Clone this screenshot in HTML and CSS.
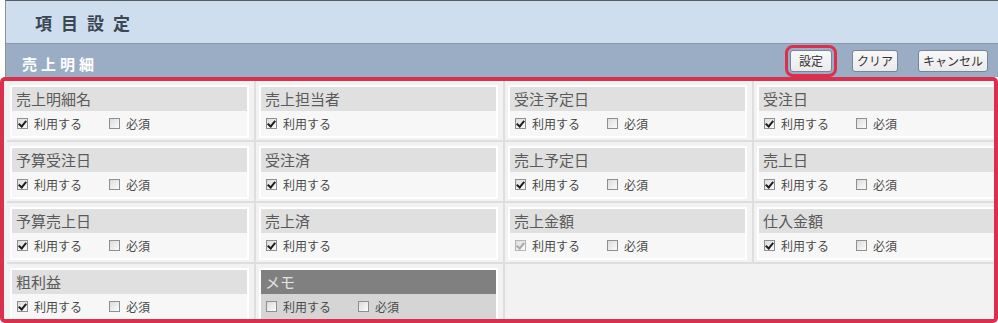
FILE: index.html
```html
<!DOCTYPE html>
<html lang="ja">
<head>
    <meta charset="UTF-8">
    <meta name="viewport" content="width=device-width, initial-scale=1.0">
    <title>項目設定</title>
    <link rel="stylesheet" href="styles.css">
</head>
<body>
    <div class="screen">
        <div class="title-bar">
            <h1>項目設定</h1>
        </div>
        <div class="section-bar">
            <h2>売上明細</h2>
            <div class="actions">
                <button type="button" class="btn btn-focus">設定</button>
                <button type="button" class="btn">クリア</button>
                <button type="button" class="btn">キャンセル</button>
            </div>
        </div>
    </div>

    <div class="items-frame">
        <div class="items">
            <div class="cell">
                <div class="item">
                    <div class="item-name">売上明細名</div>
                    <div class="item-opts">
                        <label class="opt"><span class="box checked"></span>利用する</label>
                        <label class="opt"><span class="box"></span>必須</label>
                    </div>
                </div>
            </div>
            <div class="cell">
                <div class="item">
                    <div class="item-name">売上担当者</div>
                    <div class="item-opts">
                        <label class="opt"><span class="box checked"></span>利用する</label>
                    </div>
                </div>
            </div>
            <div class="cell">
                <div class="item">
                    <div class="item-name">受注予定日</div>
                    <div class="item-opts">
                        <label class="opt"><span class="box checked"></span>利用する</label>
                        <label class="opt"><span class="box"></span>必須</label>
                    </div>
                </div>
            </div>
            <div class="cell">
                <div class="item">
                    <div class="item-name">受注日</div>
                    <div class="item-opts">
                        <label class="opt"><span class="box checked"></span>利用する</label>
                        <label class="opt"><span class="box"></span>必須</label>
                    </div>
                </div>
            </div>

            <div class="cell">
                <div class="item">
                    <div class="item-name">予算受注日</div>
                    <div class="item-opts">
                        <label class="opt"><span class="box checked"></span>利用する</label>
                        <label class="opt"><span class="box"></span>必須</label>
                    </div>
                </div>
            </div>
            <div class="cell">
                <div class="item">
                    <div class="item-name">受注済</div>
                    <div class="item-opts">
                        <label class="opt"><span class="box checked"></span>利用する</label>
                    </div>
                </div>
            </div>
            <div class="cell">
                <div class="item">
                    <div class="item-name">売上予定日</div>
                    <div class="item-opts">
                        <label class="opt"><span class="box checked"></span>利用する</label>
                        <label class="opt"><span class="box"></span>必須</label>
                    </div>
                </div>
            </div>
            <div class="cell">
                <div class="item">
                    <div class="item-name">売上日</div>
                    <div class="item-opts">
                        <label class="opt"><span class="box checked"></span>利用する</label>
                        <label class="opt"><span class="box"></span>必須</label>
                    </div>
                </div>
            </div>

            <div class="cell">
                <div class="item">
                    <div class="item-name">予算売上日</div>
                    <div class="item-opts">
                        <label class="opt"><span class="box checked"></span>利用する</label>
                        <label class="opt"><span class="box"></span>必須</label>
                    </div>
                </div>
            </div>
            <div class="cell">
                <div class="item">
                    <div class="item-name">売上済</div>
                    <div class="item-opts">
                        <label class="opt"><span class="box checked"></span>利用する</label>
                    </div>
                </div>
            </div>
            <div class="cell">
                <div class="item">
                    <div class="item-name">売上金額</div>
                    <div class="item-opts">
                        <label class="opt"><span class="box checked disabled"></span>利用する</label>
                        <label class="opt"><span class="box"></span>必須</label>
                    </div>
                </div>
            </div>
            <div class="cell">
                <div class="item">
                    <div class="item-name">仕入金額</div>
                    <div class="item-opts">
                        <label class="opt"><span class="box checked"></span>利用する</label>
                        <label class="opt"><span class="box"></span>必須</label>
                    </div>
                </div>
            </div>

            <div class="cell">
                <div class="item">
                    <div class="item-name">粗利益</div>
                    <div class="item-opts">
                        <label class="opt"><span class="box checked"></span>利用する</label>
                        <label class="opt"><span class="box"></span>必須</label>
                    </div>
                </div>
            </div>
            <div class="cell">
                <div class="item item-off">
                    <div class="item-name">メモ</div>
                    <div class="item-opts">
                        <label class="opt"><span class="box"></span>利用する</label>
                        <label class="opt"><span class="box"></span>必須</label>
                    </div>
                </div>
            </div>
        </div>
    </div>
</body>
</html>
```

FILE: styles.css
```css
body {
    margin: 0;
    background: #fff;
    font-family: "Noto Sans CJK JP", "Noto Sans", sans-serif;
    overflow: hidden;
}

.screen {
    margin-left: 5px;
    border-left: 1px solid #8a8f96;
    border-top: 1px solid #555a60;
}

.title-bar {
    height: 42px;
    background: #cedeee;
    display: flex;
    align-items: center;
    padding-left: 29px;
}

h1 {
    margin: 0;
    font-size: 17px;
    font-weight: bold;
    letter-spacing: 9px;
    color: #3b4753;
}

.section-bar {
    height: 33px;
    background: #9badc4;
    border-top: 1px solid #8699b1;
    display: flex;
    align-items: center;
    justify-content: space-between;
    padding-right: 10px;
}

h2 {
    margin: 0;
    padding: 6px 0 0 16px;
    font-size: 15px;
    font-weight: bold;
    letter-spacing: 4px;
    color: #fff;
}

.actions {
    display: flex;
    gap: 20px;
    padding-top: 1px;
}

.btn {
    height: 22px;
    min-width: 42px;
    padding: 0 4px;
    font-family: inherit;
    font-size: 12px;
    line-height: 20px;
    color: #333;
    background: linear-gradient(#f8f8f8, #ebebeb);
    border: 1px solid #76869a;
    border-radius: 3px;
}

.btn-focus {
    outline: 3px solid #d9304e;
    outline-offset: 2px;
}

.items-frame {
    height: 246px;
    box-sizing: border-box;
    border: 4px solid #d9304e;
    border-radius: 5px;
    background: #f2f2f2;
    overflow: hidden;
}

.items {
    display: grid;
    grid-template-columns: repeat(4, 249px);
    padding-left: 3px;
}

.cell {
    padding: 4px 5px 2px 3px;
    border-right: 2px solid #dedede;
    border-bottom: 2px solid #dedede;
}

.item {
    border: 2px solid #fff;
    background: #f7f7f7;
}

.item-name {
    height: 24px;
    line-height: 24px;
    padding-left: 4px;
    background: #e0e0e0;
    font-size: 15px;
    color: #5a5a5a;
}

.item-opts {
    height: 25px;
    display: flex;
    align-items: center;
    gap: 27px;
    padding-left: 5px;
}

.opt {
    display: flex;
    align-items: center;
    gap: 6px;
    font-size: 12px;
    color: #4a4a4a;
}

.box {
    width: 11px;
    height: 11px;
    box-sizing: border-box;
    border: 1px solid #8f8f8f;
    background: linear-gradient(135deg, #dcdcdc, #fbfbfb);
    position: relative;
}

.box.checked::after {
    content: "";
    position: absolute;
    left: 2px;
    top: 0px;
    width: 3px;
    height: 6px;
    border: solid #1e1e1e;
    border-width: 0 2px 2px 0;
    transform: rotate(40deg);
}

.box.disabled {
    border-color: #b5b5b5;
}

.box.disabled::after {
    border-color: #a8a8a8;
}

.item-off {
    background: #d5d5d5;
}

.item-off .item-name {
    background: #808080;
    color: #e4e4e4;
}
```
